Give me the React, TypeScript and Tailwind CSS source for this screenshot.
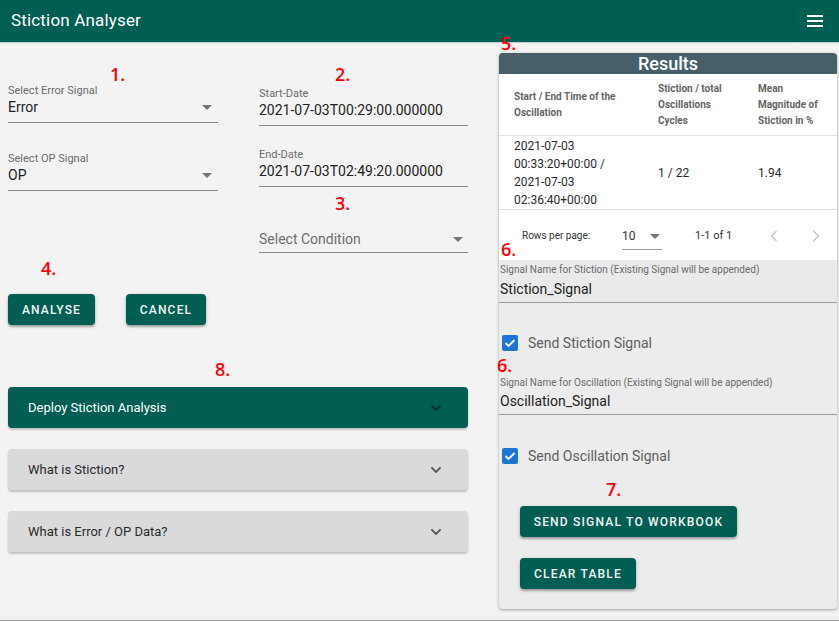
import React from "react";

const Caret = () => (
  <svg width="10" height="5" viewBox="0 0 10 5" className="shrink-0">
    <path d="M0 0 L10 0 L5 5 Z" fill="#757575" />
  </svg>
);

const Chevron = ({ color }: { color: string }) => (
  <svg width="12" height="8" viewBox="0 0 12 8">
    <path d="M1.4 1.3 L6 5.9 L10.6 1.3" stroke={color} strokeWidth="1.8" fill="none" />
  </svg>
);

const Check = () => (
  <div className="w-[16px] h-[16px] rounded-[2px] bg-[#1976d2] flex items-center justify-center">
    <svg width="12" height="10" viewBox="0 0 12 10">
      <path d="M1.5 5 L4.5 8 L10.5 2" stroke="white" strokeWidth="1.8" fill="none" />
    </svg>
  </div>
);

const Red = ({ x, y, t }: { x: number; y: number; t: string }) => (
  <div
    className="absolute text-[18px] leading-[20px] font-semibold text-[#ff0000] font-['Open_Sans',sans-serif]"
    style={{ left: x, top: y }}
  >
    {t}
  </div>
);

const Btn = ({ children, w }: { children: React.ReactNode; w: string }) => (
  <button
    className={`${w} h-[31px] rounded-[4px] bg-[#005e52] text-[#f4f4f4] text-[12px] font-medium tracking-[0.1em] uppercase shadow-[0_2px_2px_rgba(0,0,0,0.25),0_1px_4px_rgba(0,0,0,0.15)] flex items-center justify-center`}
  >
    {children}
  </button>
);

export default function App() {
  return (
    <div className="relative w-[839px] h-[621px] bg-[#f3f3f3] overflow-hidden font-['Roboto',sans-serif] border-b border-[#9e9e9e]">
      {/* Header */}
      <div className="h-[43px] bg-[#015e52] flex border-b border-[#b9cfd0]">
        <div className="flex-1 flex items-center pl-[11px] text-white text-[17px] tracking-[0.01em]">
          Stiction Analyser
        </div>
        <div className="w-[46px] border-l border-[#0a5147] flex items-center justify-center">
          <div className="flex flex-col gap-[3px] w-[16px] mr-[3px]">
            <div className="h-[2px] bg-white" />
            <div className="h-[2px] bg-white" />
            <div className="h-[2px] bg-white" />
          </div>
        </div>
      </div>

      <div className="flex">
        {/* Left */}
        <div className="w-[499px] pl-[8px] pr-[31px]">
          <div className="flex gap-[41px]">
            <div className="w-[210px] flex flex-col pt-[41px]">
              <div className="border-b border-[#8a8a8a] pb-[4px]">
                <div className="text-[11px] leading-[13px] text-[#6b6b6b]">Select Error Signal</div>
                <div className="flex items-center justify-between pr-[6px]">
                  <span className="text-[14px] leading-[21px] text-[#222]">Error</span>
                  <Caret />
                </div>
              </div>
              <div className="border-b border-[#8a8a8a] pb-[4px] mt-[29px]">
                <div className="text-[11px] leading-[13px] text-[#6b6b6b]">Select OP Signal</div>
                <div className="flex items-center justify-between pr-[6px]">
                  <span className="text-[14px] leading-[21px] text-[#222]">OP</span>
                  <Caret />
                </div>
              </div>
            </div>
            <div className="w-[209px] flex flex-col pt-[44px]">
              <div className="border-b border-[#8a8a8a] pb-[4px]">
                <div className="text-[11px] leading-[13px] text-[#6b6b6b]">Start-Date</div>
                <div className="text-[14px] leading-[21px] text-[#222]">2021-07-03T00:29:00.000000</div>
              </div>
              <div className="border-b border-[#8a8a8a] pb-[4px] mt-[22px]">
                <div className="text-[11px] leading-[13px] text-[#6b6b6b]">End-Date</div>
                <div className="text-[14px] leading-[21px] text-[#222]">2021-07-03T02:49:20.000000</div>
              </div>
              <div className="border-b border-[#8a8a8a] pb-[3px] mt-[42px] flex items-center justify-between pr-[5px]">
                <span className="text-[14px] leading-[20px] text-[#6e6e6e]">Select Condition</span>
                <Caret />
              </div>
            </div>
          </div>

          <div className="flex gap-[31px] mt-[41px]">
            <Btn w="w-[87px]">Analyse</Btn>
            <Btn w="w-[80px]">Cancel</Btn>
          </div>

          <div className="mt-[62px] flex flex-col gap-[21px]">
            <div className="h-[41px] rounded-[4px] bg-[#015e52] flex items-center justify-between pl-[20px] pr-[26px] shadow-[0_2px_2px_rgba(0,0,0,0.2)]">
              <span className="text-white text-[13px]">Deploy Stiction Analysis</span>
              <Chevron color="#0c2f2a" />
            </div>
            <div className="h-[41px] rounded-[4px] bg-[#dadada] flex items-center justify-between pl-[20px] pr-[26px] shadow-[0_2px_2px_rgba(0,0,0,0.2)]">
              <span className="text-[#2a2a2a] text-[13px]">What is Stiction?</span>
              <Chevron color="#555" />
            </div>
            <div className="h-[41px] rounded-[4px] bg-[#dadada] flex items-center justify-between pl-[20px] pr-[26px] shadow-[0_2px_2px_rgba(0,0,0,0.2)]">
              <span className="text-[#2a2a2a] text-[13px]">What is Error / OP Data?</span>
              <Chevron color="#555" />
            </div>
          </div>
        </div>

        {/* Right panel */}
        <div className="w-[338px] h-[556px] mt-[10px] rounded-[4px] overflow-hidden bg-[#ececec] shadow-[0_1px_3px_rgba(0,0,0,0.35)] flex flex-col">
          <div className="h-[21px] bg-[#465f69] text-white text-[18px] font-medium leading-[21px] text-center">
            Results
          </div>
          <div className="bg-white">
            <div className="flex h-[62px] items-center border-b border-[#e2e2e2] text-[10px] leading-[16px] font-bold text-[#646464]">
              <div className="w-[159px] pl-[15px] pr-[8px]">Start / End Time of the<br />Oscillation</div>
              <div className="w-[100px] pr-[4px]">Stiction / total<br />Oscillations<br />Cycles</div>
              <div className="flex-1">Mean<br />Magnitude of<br />Stiction in %</div>
            </div>
            <div className="flex h-[74px] items-center border-b border-[#e2e2e2] text-[12px] leading-[18px] text-[#2a2a2a]">
              <div className="w-[159px] pl-[15px]">2021-07-03<br />00:33:20+00:00 /<br />2021-07-03<br />02:36:40+00:00</div>
              <div className="w-[100px]">1 / 22</div>
              <div className="flex-1">1.94</div>
            </div>
            <div className="h-[50px] flex items-start pt-[18px] text-[10px] text-[#333]">
              <div className="w-[123px] pl-[23px] leading-[16px]">Rows per page:</div>
              <div className="w-[40px] border-b border-[#9a9a9a] h-[22px] flex items-start justify-between pr-[2px]">
                <span className="text-[12px] leading-[16px]">10</span>
                <div className="mt-[6px]"><Caret /></div>
              </div>
              <div className="w-[77px] pl-[33px] text-[11px] leading-[16px] whitespace-nowrap">1-1 of 1</div>
              <div className="flex-1 flex justify-end gap-[34px] pr-[17px] pt-[2px]">
                <svg width="8" height="12" viewBox="0 0 8 12">
                  <path d="M6.5 1 L1.5 6 L6.5 11" stroke="#c4c4c4" strokeWidth="1.5" fill="none" />
                </svg>
                <svg width="8" height="12" viewBox="0 0 8 12">
                  <path d="M1.5 1 L6.5 6 L1.5 11" stroke="#c4c4c4" strokeWidth="1.5" fill="none" />
                </svg>
              </div>
            </div>
          </div>

          <div className="flex flex-col">
            <div className="bg-[#eaeaea] border-b border-[#9a9a9a] pl-[1px] pt-[4px] pb-[3px]">
              <div className="text-[10px] leading-[12px] text-[#6b6b6b]">Signal Name for Stiction (Existing Signal will be appended)</div>
              <div className="text-[14px] leading-[20px] text-[#222] mt-[3px]">Stiction_Signal</div>
            </div>
            <div className="flex items-center gap-[10px] pl-[3px] mt-[32px] h-[16px]">
              <Check />
              <span className="text-[14px] text-[#5e5e5e]">Send Stiction Signal</span>
            </div>
            <div className="border-b border-[#9a9a9a] pl-[1px] pt-[26px] pb-[3px]">
              <div className="text-[10px] leading-[12px] text-[#6b6b6b]">Signal Name for Oscillation (Existing Signal will be appended)</div>
              <div className="text-[14px] leading-[20px] text-[#222] mt-[2px]">Oscillation_Signal</div>
            </div>
            <div className="flex items-center gap-[10px] pl-[3px] mt-[33px] h-[16px]">
              <Check />
              <span className="text-[14px] text-[#5e5e5e]">Send Oscillation Signal</span>
            </div>
            <div className="pl-[21px] mt-[42px] flex flex-col gap-[21px]">
              <Btn w="w-[217px]">Send Signal to Workbook</Btn>
              <Btn w="w-[116px]">Clear Table</Btn>
            </div>
          </div>
        </div>
      </div>

      <Red x={110} y={64} t="1." />
      <Red x={335} y={64} t="2." />
      <Red x={335} y={193} t="3." />
      <Red x={41} y={258} t="4." />
      <Red x={501} y={33} t="5." />
      <Red x={501} y={239} t="6." />
      <Red x={497} y={355} t="6." />
      <Red x={606} y={479} t="7." />
      <Red x={215} y={359} t="8." />
    </div>
  );
}
